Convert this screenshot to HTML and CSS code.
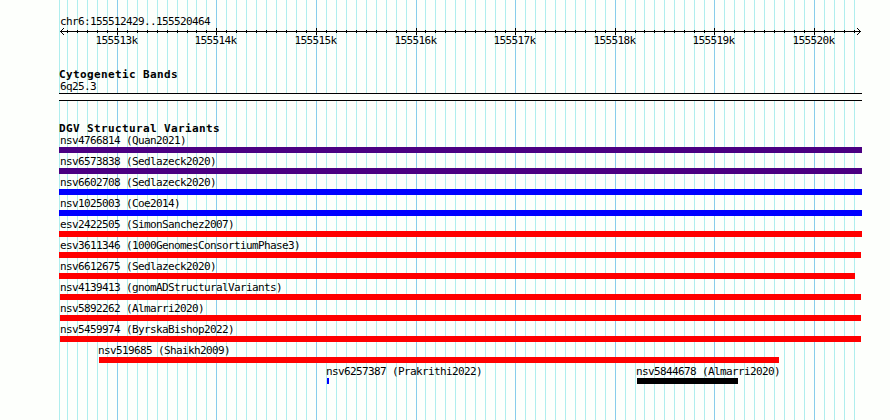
FILE: index.html
```html
<!DOCTYPE html>
<html lang="en">
<head>
  <meta charset="UTF-8">
  <title>chr6:155512429..155520464</title>
  <link rel="stylesheet" href="styles.css">
</head>
<body>
  <div class="browser">
    <svg class="grid" id="grid" width="890" height="420" shape-rendering="crispEdges"></svg>

    <div class="tracks">
      <div class="region">chr6:155512429..155520464</div>
      <svg class="ruler" id="ruler" width="830" height="22" shape-rendering="crispEdges">
        <path d="M1 5.5H801" stroke="#000"/>
        <path d="M0 5h1v1h-1zM1 4h1v3h-1zM2 3h1v1h-1zM2 7h1v1h-1zM3 2h1v1h-1zM3 8h1v1h-1z"/>
        <path d="M800 5h1v1h-1zM799 4h1v3h-1zM798 3h1v1h-1zM798 7h1v1h-1zM797 2h1v1h-1zM797 8h1v1h-1z"/>
      </svg>

      <h2 class="title">Cytogenetic Bands</h2>
      <div class="band-label">6q25.3</div>
      <div class="band"></div>

      <h2 class="title variants">DGV Structural Variants</h2>
      <div id="variants"></div>
    </div>
  </div>

  <script>
    const start = 155512429;
    const end = 155520464;
    const scale = 800 / (end - start + 1);
    const ns = 'http://www.w3.org/2000/svg';
    const grid = document.getElementById('grid');
    const ruler = document.getElementById('ruler');

    function add(svg, name, attrs, text) {
      const el = document.createElementNS(ns, name);
      for (const key in attrs) el.setAttribute(key, attrs[key]);
      if (text) el.textContent = text;
      svg.appendChild(el);
    }

    add(grid, 'rect', { x: 59, y: 0, width: 1, height: 420, class: 'minor' });

    for (let pos = 155512500; pos <= end; pos += 100) {
      const x = Math.round((pos - start) * scale);
      const major = pos % 1000 === 0;
      add(grid, 'rect', { x: x + 60, y: 0, width: 1, height: 420, class: major ? 'major' : 'minor' });
      add(ruler, 'rect', { x: x, y: major ? 2 : 4, width: 1, height: major ? 7 : 3 });
      if (major) {
        add(ruler, 'text', { x: x - 21.5, y: 18 }, pos / 1000 + 'k');
      }
    }

    // name, color, left and right edge of the bar, left edge of the label
    const variants = [[
      ['nsv4766814 (Quan2021)', 'indigo', 59, 862, 60]
    ], [
      ['nsv6573838 (Sedlazeck2020)', 'indigo', 59, 862, 60]
    ], [
      ['nsv6602708 (Sedlazeck2020)', 'blue', 59, 862, 60]
    ], [
      ['nsv1025003 (Coe2014)', 'blue', 59, 862, 60]
    ], [
      ['esv2422505 (SimonSanchez2007)', 'red', 59, 862, 60]
    ], [
      ['esv3611346 (1000GenomesConsortiumPhase3)', 'red', 59, 861, 60]
    ], [
      ['nsv6612675 (Sedlazeck2020)', 'red', 59, 855, 60]
    ], [
      ['nsv4139413 (gnomADStructuralVariants)', 'red', 60, 861, 60]
    ], [
      ['nsv5892262 (Almarri2020)', 'red', 60, 861, 60]
    ], [
      ['nsv5459974 (ByrskaBishop2022)', 'red', 60, 861, 60]
    ], [
      ['nsv519685 (Shaikh2009)', 'red', 99, 779, 98]
    ], [
      ['nsv6257387 (Prakrithi2022)', 'blue', 327, 329, 326],
      ['nsv5844678 (Almarri2020)', 'black', 637, 738, 636]
    ]];

    variants.forEach(function (items) {
      const row = document.createElement('div');
      row.className = 'row';
      let edge = 59;
      items.forEach(function (v) {
        const item = document.createElement('div');
        item.className = 'variant';
        item.style.marginLeft = (v[2] - edge) + 'px';
        item.style.width = (v[3] - v[2]) + 'px';
        edge = v[3];

        const label = document.createElement('div');
        label.className = 'label';
        label.textContent = v[0];
        label.style.marginLeft = (v[4] - v[2]) + 'px';

        const bar = document.createElement('div');
        bar.className = 'bar ' + v[1];
        item.append(label, bar);
        row.appendChild(item);
      });
      document.getElementById('variants').appendChild(row);
    });
  </script>
</body>
</html>
```
FILE: styles.css
```css
body {
  margin: 0;
  background: #fdfffc;
  color: #000;
  font-family: "DejaVu Sans Mono", monospace;
  font-size: 11px;
  line-height: 13px;
  letter-spacing: -0.622px;
  white-space: nowrap;
}

.browser {
  display: grid;
  width: 890px;
  height: 420px;
  overflow: hidden;
}

/* grid lines run behind the tracks */
.grid,
.tracks {
  grid-area: 1 / 1;
}

.grid,
.ruler {
  display: block;
}

.minor {
  fill: #afeeee;
}

.major {
  fill: #87ceeb;
}

.tracks {
  padding: 15px 0 0 59px;
}

.region {
  height: 11px;
  padding-left: 1px;
}

.ruler {
  margin-left: 1px;
}

.title {
  margin: 20px 0 0;
  height: 12px;
  font-size: 11px;
  font-weight: bold;
  letter-spacing: 0.378px;
}

.title.variants {
  margin-top: 21px;
  height: 13px;
}

.band-label {
  height: 13px;
  padding-left: 1px;
}

.band {
  width: 803px;
  height: 6px;
  border-top: 1px solid #000;
  border-bottom: 1px solid #000;
  background: #fdfffc;
}

.row {
  display: flex;
  height: 21px;
}

.variant {
  flex: none;
}

.label {
  height: 12px;
  line-height: 11px;
}

.bar {
  height: 6px;
}

.indigo {
  background: #4b0082;
}

.blue {
  background: #0000ff;
}

.red {
  background: #ff0000;
}

.black {
  background: #000;
}
```
